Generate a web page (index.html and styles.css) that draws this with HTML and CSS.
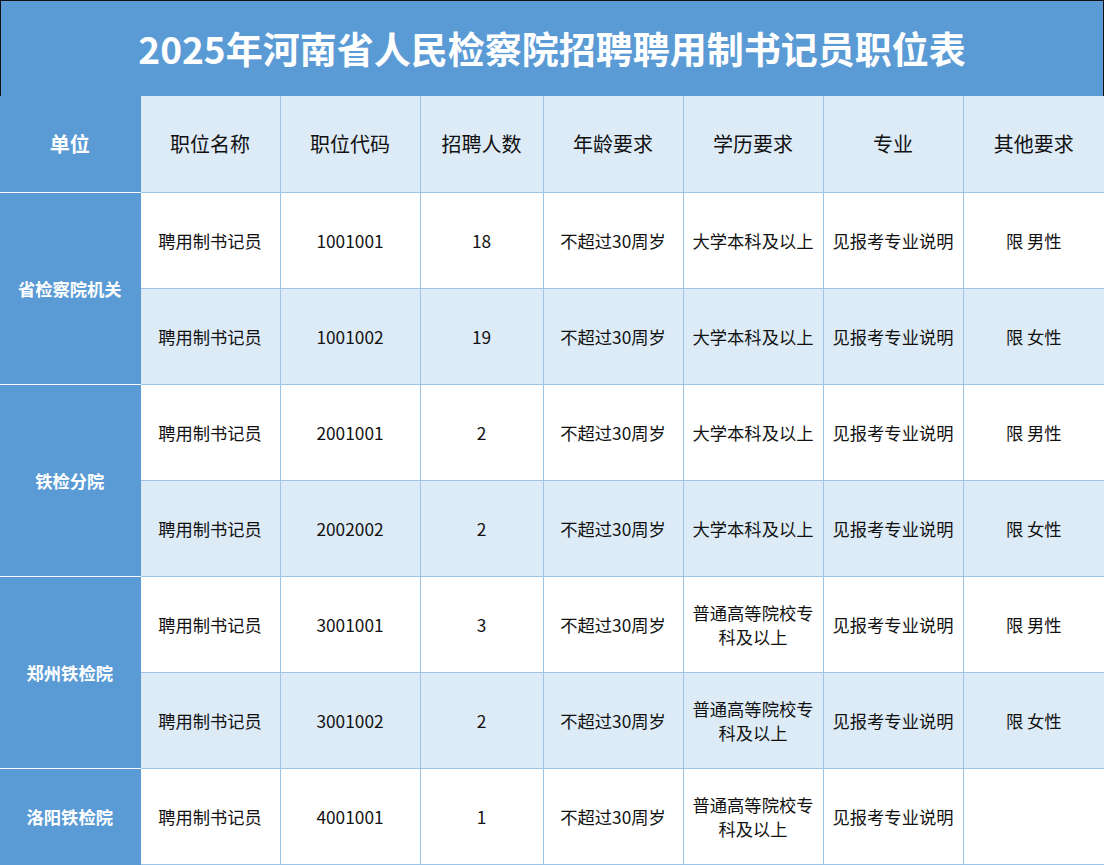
FILE: index.html
```html
<!DOCTYPE html>
<html lang="zh-CN">
<head>
<meta charset="utf-8">
<title>2025年河南省人民检察院招聘聘用制书记员职位表</title>
<link rel="stylesheet" href="styles.css">
</head>
<body>
<div class="sheet">
  <div class="title">2025年河南省人民检察院招聘聘用制书记员职位表</div>
  <table class="grid">
    <colgroup>
      <col class="c-unit"><col class="c-w"><col class="c-w"><col class="c-n"><col class="c-w"><col class="c-w"><col class="c-w"><col class="c-last">
    </colgroup>
    <thead>
      <tr class="head">
        <th class="unit">单位</th>
        <th>职位名称</th>
        <th>职位代码</th>
        <th>招聘人数</th>
        <th>年龄要求</th>
        <th>学历要求</th>
        <th>专业</th>
        <th>其他要求</th>
      </tr>
    </thead>
    <tbody>
      <tr class="odd">
        <td class="unit" rowspan="2">省检察院机关</td>
        <td>聘用制书记员</td><td>1001001</td><td>18</td><td>不超过30周岁</td><td>大学本科及以上</td><td>见报考专业说明</td><td>限 男性</td>
      </tr>
      <tr class="even">
        <td>聘用制书记员</td><td>1001002</td><td>19</td><td>不超过30周岁</td><td>大学本科及以上</td><td>见报考专业说明</td><td>限 女性</td>
      </tr>
      <tr class="odd">
        <td class="unit" rowspan="2">铁检分院</td>
        <td>聘用制书记员</td><td>2001001</td><td>2</td><td>不超过30周岁</td><td>大学本科及以上</td><td>见报考专业说明</td><td>限 男性</td>
      </tr>
      <tr class="even">
        <td>聘用制书记员</td><td>2002002</td><td>2</td><td>不超过30周岁</td><td>大学本科及以上</td><td>见报考专业说明</td><td>限 女性</td>
      </tr>
      <tr class="odd">
        <td class="unit" rowspan="2">郑州铁检院</td>
        <td>聘用制书记员</td><td>3001001</td><td>3</td><td>不超过30周岁</td><td>普通高等院校专科及以上</td><td>见报考专业说明</td><td>限 男性</td>
      </tr>
      <tr class="even">
        <td>聘用制书记员</td><td>3001002</td><td>2</td><td>不超过30周岁</td><td>普通高等院校专科及以上</td><td>见报考专业说明</td><td>限 女性</td>
      </tr>
      <tr class="odd">
        <td class="unit">洛阳铁检院</td>
        <td>聘用制书记员</td><td>4001001</td><td>1</td><td>不超过30周岁</td><td>普通高等院校专科及以上</td><td>见报考专业说明</td><td></td>
      </tr>
    </tbody>
  </table>
</div>
</body>
</html>
```

FILE: styles.css
```css
html, body {
  margin: 0;
  padding: 0;
  background: #ffffff;
}

body {
  font-family: "Noto Sans CJK SC", "Noto Sans", "Liberation Sans", sans-serif;
  color: #111111;
}

.sheet {
  width: 1104px;
}

.title {
  box-sizing: border-box;
  height: 96px;
  background: #5b9bd5;
  border-top: 1px solid #111111;
  border-left: 1px solid #111111;
  border-right: 1px solid #111111;
  color: #ffffff;
  font-weight: 700;
  font-size: 37px;
  display: flex;
  align-items: center;
  justify-content: center;
  padding-bottom: 2px;
}

.grid {
  width: 1104px;
  table-layout: fixed;
  border-collapse: collapse;
  border-spacing: 0;
}

.c-unit { width: 140px; }
.c-w { width: 140px; }
.c-n { width: 123px; }
.c-last { width: 141px; }

.grid th,
.grid td {
  height: 95px;
  padding: 0 8px;
  text-align: center;
  vertical-align: middle;
  border: 1px solid #9dc3e6;
  font-size: 17.3px;
  line-height: 24px;
  font-weight: 400;
}

.grid th {
  height: 96px;
  font-size: 20px;
  background: #ddebf7;
  border-top: none;
}

.grid .odd td { background: #ffffff; }
.grid .even td { background: #ddebf7; }

.grid tr th:first-child,
.grid tr td:first-child { border-left: none; }
.grid tr th:last-child,
.grid tr td:last-child { border-right: none; }

.grid th.unit,
.grid td.unit {
  background: #5b9bd5;
  color: #ffffff;
  font-weight: 700;
  font-size: 17.3px;
  border-top: 1px solid #ffffff;
  border-bottom: 1px solid #ffffff;
  border-right: 1px solid #5b9bd5;
}

.grid th.unit {
  font-size: 20px;
  border-top: none;
}

.grid tbody tr:last-child td {
  border-bottom: 1px solid #9dc3e6;
}
.grid tbody tr:last-child td.unit {
  border-bottom: 1px solid #5b9bd5;
}
```
